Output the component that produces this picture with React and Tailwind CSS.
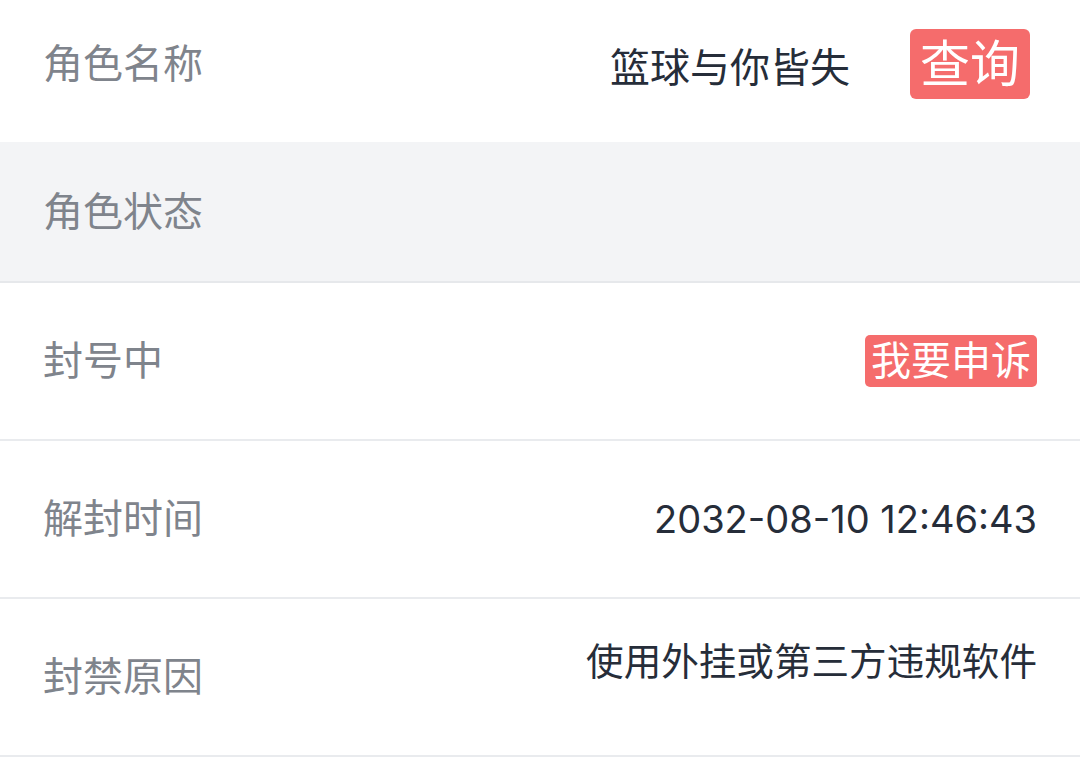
const rows = [
  { label: "封号中", badge: "我要申诉" },
  { label: "解封时间", value: "2032-08-10 12:46:43" },
  { label: "封禁原因", value: "使用外挂或第三方违规软件", top: true },
];

const font = { fontFamily: '"Inter", "Noto Sans CJK SC", sans-serif' };

export default function App() {
  return (
    <div className="w-[1080px] h-[757px] bg-white overflow-hidden" style={font}>
      {/* name + query */}
      <div className="h-[142px] flex items-center justify-between pl-[43px] pr-[50px] pb-[14px]">
        <span className="text-[40px] leading-none text-[#7f848c]">角色名称</span>
        <div className="flex items-center">
          <span className="text-[40px] leading-none text-[#262d39] mt-[8px]">篮球与你皆失</span>
          <button className="ml-[60px] h-[70px] px-[10px] rounded-[6px] bg-[#f56c6c] text-white text-[50px] leading-none">
            查询
          </button>
        </div>
      </div>

      {/* status header */}
      <div className="h-[141px] flex items-center bg-[#f3f4f6] border-b-2 border-[#e6e8eb] pl-[43px]">
        <span className="text-[40px] leading-none text-[#7f848c]">角色状态</span>
      </div>

      {rows.map((r) => (
        <div
          key={r.label}
          className="h-[158px] flex items-center justify-between border-b-2 border-[#e9ebee] pl-[43px] pr-[43px]"
        >
          <span className="text-[40px] leading-none text-[#7f848c]">{r.label}</span>
          {r.badge && (
            <span className="h-[52px] flex items-center px-[6px] rounded-[5px] bg-[#f56c6c] text-white text-[40px] leading-none">
              {r.badge}
            </span>
          )}
          {r.value && (
            <span className={`leading-none text-[#262d39] ${r.top ? "text-[37.6px] mb-[30px]" : "text-[38px]"}`}>
              {r.value}
            </span>
          )}
        </div>
      ))}
    </div>
  );
}
